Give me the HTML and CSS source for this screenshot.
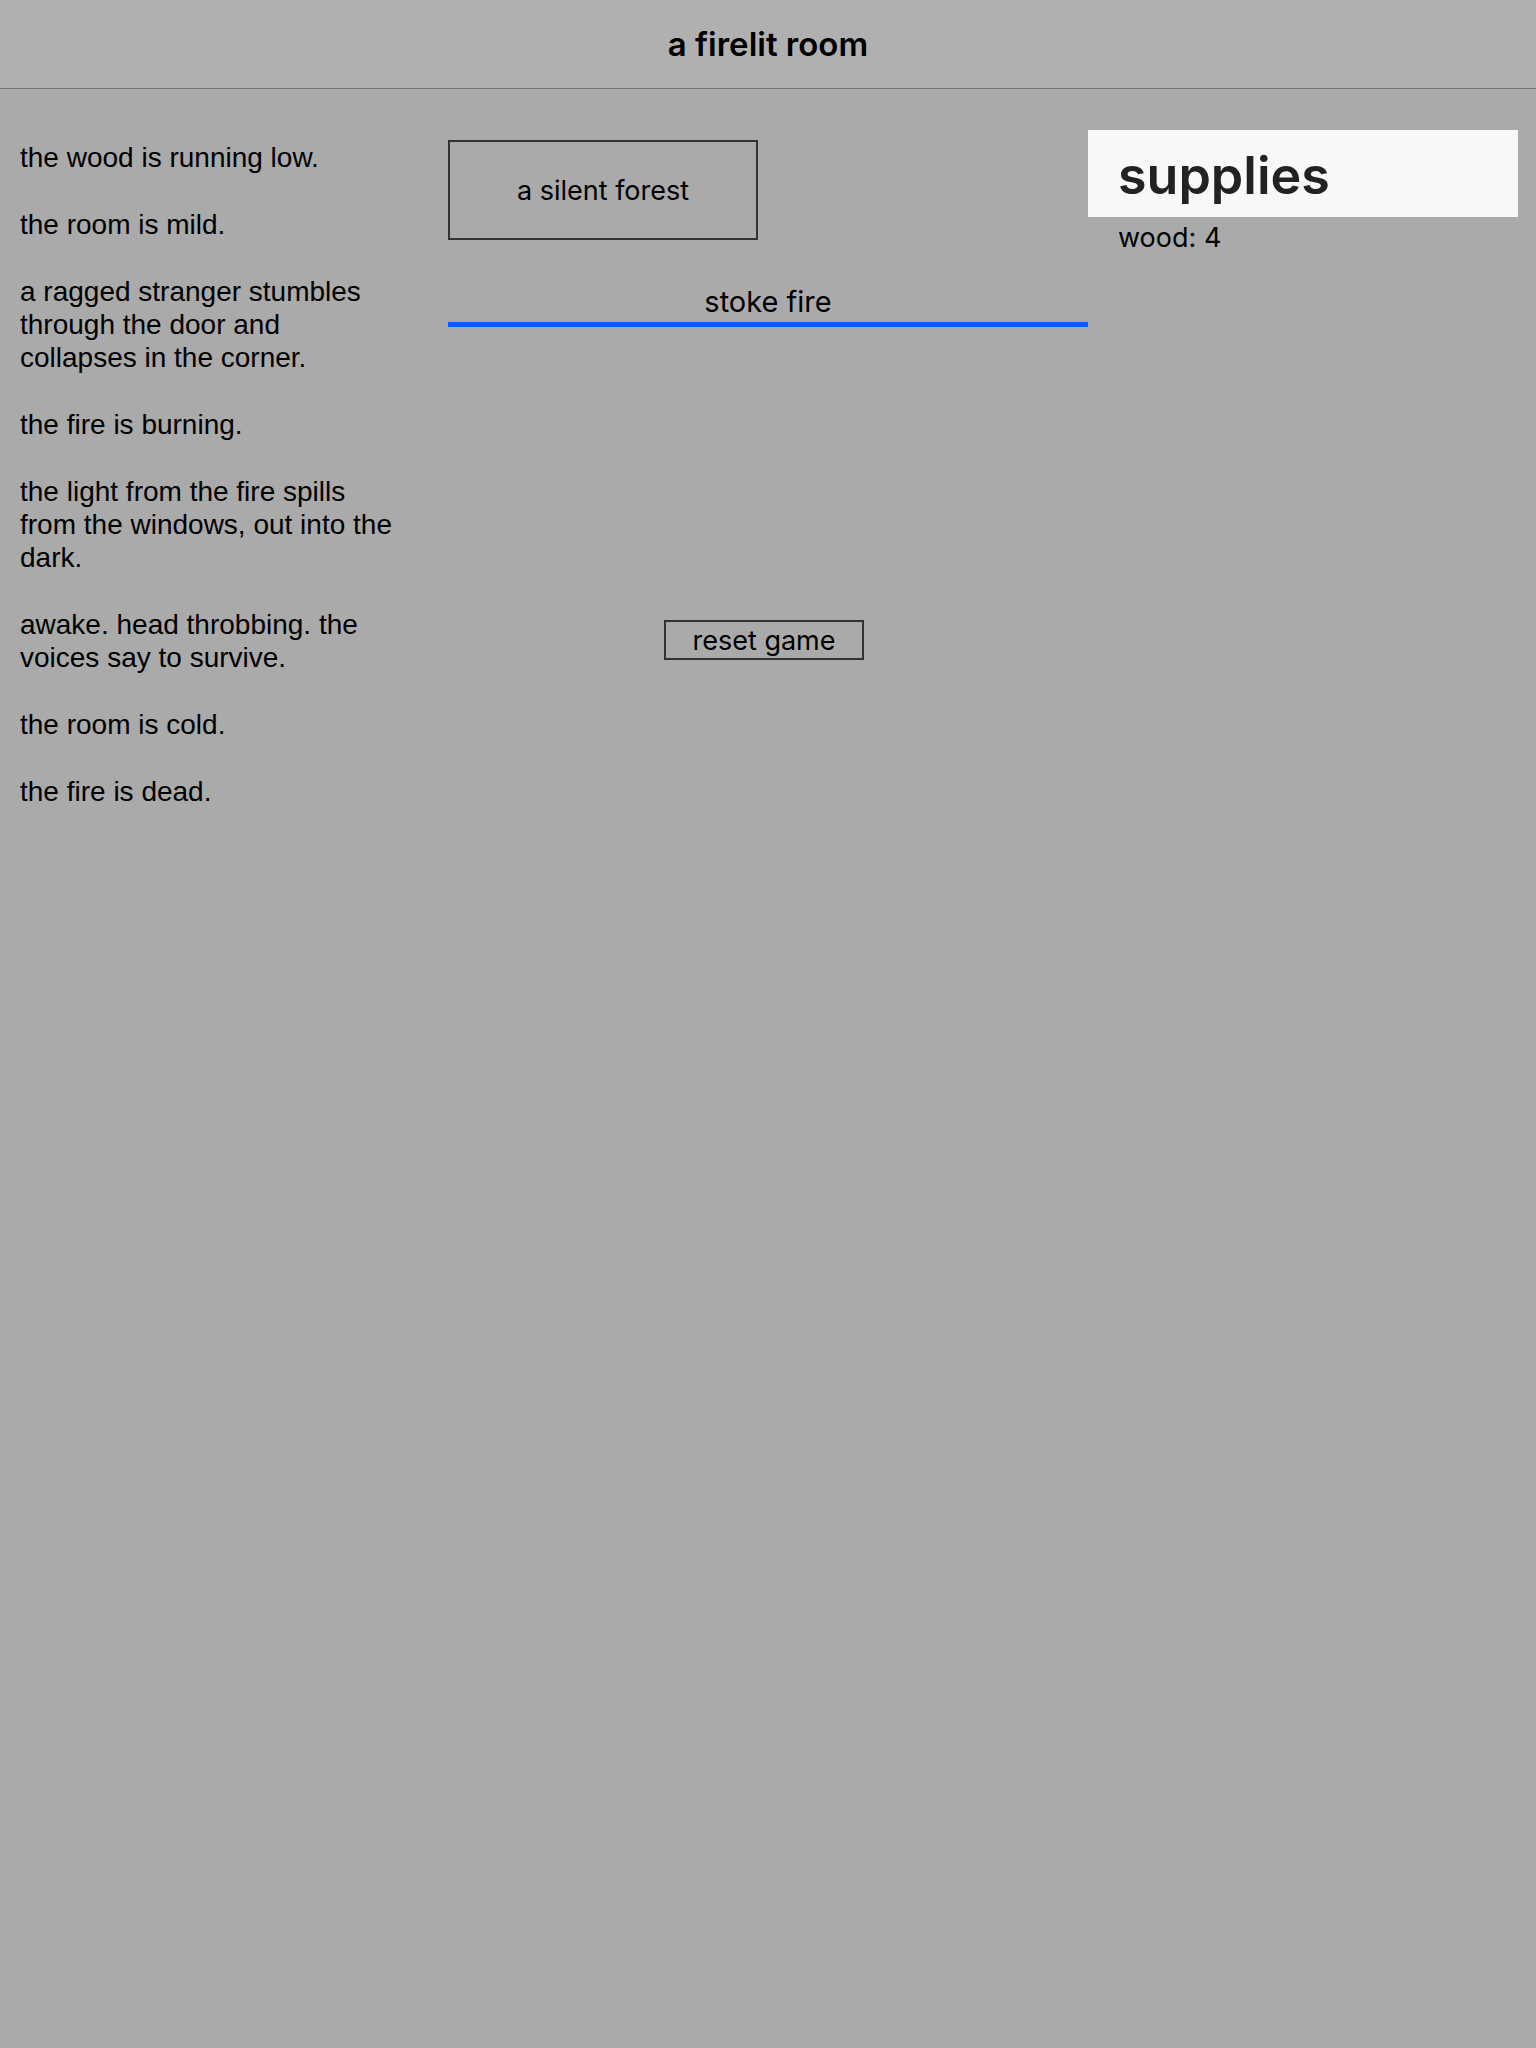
FILE: index.html
```html
<!DOCTYPE html>
<html lang="en">
<head>
<meta charset="utf-8">
<title>a firelit room</title>
<link rel="stylesheet" href="styles.css">
</head>
<body>
<header class="bar"><h1 class="bar-title">a firelit room</h1></header>
<main class="room">
  <section class="log">
    <p>the wood is running low.</p>
    <p>the room is mild.</p>
    <p>a ragged stranger stumbles<br>through the door and<br>collapses in the corner.</p>
    <p>the fire is burning.</p>
    <p>the light from the fire spills<br>from the windows, out into the<br>dark.</p>
    <p>awake. head throbbing. the<br>voices say to survive.</p>
    <p>the room is cold.</p>
    <p>the fire is dead.</p>
  </section>
  <section class="actions">
    <button class="travel" type="button">a silent forest</button>
    <button class="stoke" type="button">stoke fire</button>
    <button class="reset" type="button">reset game</button>
  </section>
  <section class="supplies">
    <h2 class="supplies-title">supplies</h2>
    <p class="supply">wood: 4</p>
  </section>
</main>
</body>
</html>
```
FILE: styles.css
```css
* { box-sizing: border-box; }

body {
  margin: 0;
  min-height: 100vh;
  background: #aaa;
  color: #000;
  font-family: Inter, "Liberation Sans", sans-serif;
  font-size: 27px;
}

h1, h2, p { margin: 0; }

.bar {
  height: 89px;
  display: flex;
  align-items: center;
  justify-content: center;
  background: #b0b0b0;
  border-bottom: 1px solid #747474;
}

.bar-title {
  font-size: 33px;
  font-weight: 600;
}

.room {
  display: grid;
  grid-template-columns: 7fr 10fr 7fr;
  padding-top: 41px;
}

.log {
  display: flex;
  flex-direction: column;
  gap: 34px;
  padding: 11px 20px;
  font-family: "Liberation Sans", Arial, sans-serif;
  font-size: 28px;
  line-height: 33px;
  white-space: nowrap;
}

.actions {
  display: flex;
  flex-direction: column;
  padding-top: 10px;
}

button {
  padding: 0;
  background: none;
  border: 2px solid #333;
  border-radius: 0;
  color: #000;
  font: inherit;
}

.travel {
  width: 310px;
  height: 100px;
}

.stoke {
  height: 47px;
  margin-top: 40px;
  border: 0;
  border-bottom: 5px solid #0060ff;
  font-size: 29px;
}

.reset {
  align-self: center;
  width: 200px;
  height: 40px;
  margin: 293px 8px 0 0;
}

.supplies { padding-right: 18px; }

.supplies-title {
  padding: 4px 30px 0;
  background: #f8f8f8;
  color: #222;
  font-size: 52px;
  font-weight: 600;
  line-height: 83px;
}

.supply {
  padding: 4px 30px;
  line-height: 34px;
}
```
